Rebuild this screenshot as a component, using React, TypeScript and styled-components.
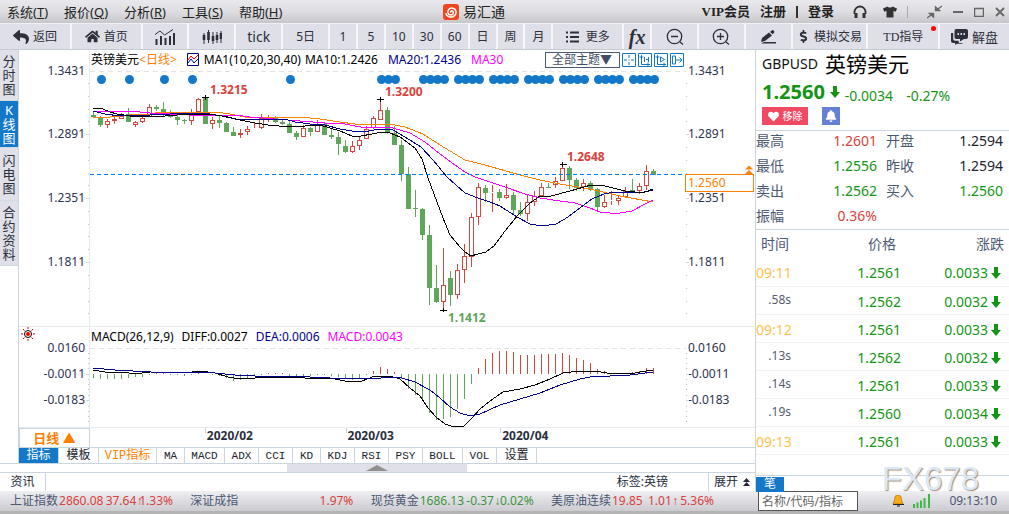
import React from 'react';
import styled, { createGlobalStyle, css } from 'styled-components';
import { FaReply, FaHome, FaTshirt, FaDollarSign, FaHeart, FaBell } from 'react-icons/fa';

const GlobalStyle = createGlobalStyle`
  * { box-sizing: border-box; }
  body { margin: 0; background: #fff; }
  body, button, input, select { font-family: "Noto Sans", "Noto Sans CJK SC", sans-serif; }
  button { border: 0; margin: 0; padding: 0; background: none; color: inherit; font-size: 12px; line-height: 14px; white-space: nowrap; }
  svg { display: block; flex: none; }
`;

const RED = '#d8423c';
const GREEN = '#149414';
const LINE = '#cbd5de';
const UP = '#d4473f';
const DOWN = '#5fa55a';
const BLUE = '#1478c8';
const SLATE = '#4b5872';

const Page = styled.div`
  min-height: 100vh;
  display: flex;
  flex-direction: column;
  font-size: 12px;
  line-height: 16px;
  color: #222a3a;
`;

/* title bar */
const TitleBar = styled.header`
  display: grid;
  grid-template-columns: 443fr auto 504fr;
  align-items: center;
  height: 23px;
  color: #222;
  background: linear-gradient(#e9e9ed, #dedee2 50%, #c6c6cb);
`;
const Menu = styled.nav`
  display: flex;
  gap: 16px;
  padding-left: 7px;
`;
const MenuButton = styled.button`
  font-size: 13px;
`;
const Brand = styled.div`
  display: flex;
  align-items: center;
  gap: 4px;
  font-size: 14px;
`;
const TitleTools = styled.div`
  display: flex;
  align-items: center;
  justify-content: flex-end;
  padding-right: 4px;
  gap: 10px;
`;
const Account = styled.a`
  color: #222;
  font-family: "Liberation Serif", "Noto Sans CJK SC", serif;
  font-size: 13px;
  font-weight: 700;
  line-height: 16px;
  text-decoration: none;
`;
const Bar = styled.i<{ $soft?: boolean }>`
  width: ${(p) => (p.$soft ? 1 : 2)}px;
  height: 12px;
  background: ${(p) => (p.$soft ? '#aaa' : '#333')};
`;
const IconButton = styled.button`
  display: flex;
  align-items: center;
  color: #333;
`;
const ToolGroup = styled.div<{ $gap: number; $left?: number }>`
  display: flex;
  align-items: center;
  gap: ${(p) => p.$gap}px;
  margin-left: ${(p) => p.$left || 0}px;
`;

/* toolbar */
const Toolbar = styled.nav`
  display: flex;
  gap: 2px;
  height: 27px;
  background: #f6f6fa;
  border-bottom: 1px solid #c4cbd4;
`;
const Tool = styled.button<{ $w: number; $size?: number }>`
  position: relative;
  flex: ${(p) => p.$w} 1 0;
  display: flex;
  align-items: center;
  justify-content: center;
  gap: 4px;
  background: #dfdfe8;
  border-top: 1px solid #eef0f5;
  font-size: ${(p) => p.$size || 12}px;
  line-height: 18px;
  color: #2d3038;
`;
const Serif = styled.span`
  font-family: "Liberation Serif", "Noto Sans CJK SC", serif;
`;
const Fx = styled.span`
  font-family: "Liberation Serif", serif;
  font-size: 20px;
  line-height: 20px;
  font-style: italic;
  font-weight: 700;
`;
const Dot = styled.i`
  position: absolute;
  right: 2px;
  top: 2px;
  width: 5px;
  height: 5px;
  border-radius: 50%;
  background: #f00;
`;

/* body */
const Main = styled.main`
  flex: 1;
  display: flex;
`;
const Left = styled.section`
  flex: 1;
  min-width: 0;
  display: flex;
  flex-direction: column;
`;
const Work = styled.div`
  flex: 1;
  display: flex;
  border-bottom: 1px solid ${LINE};
`;
const Side = styled.nav`
  width: 19px;
  border-right: 1px solid ${LINE};
`;
const SideTab = styled.button<{ $on?: boolean; $pad: number }>`
  display: block;
  width: 18px;
  padding: ${(p) => p.$pad}px 2px;
  white-space: normal;
  word-break: break-all;
  font-size: 13px;
  line-height: 14px;
  border-bottom: 1px solid #d0d8e2;
  background: ${(p) => (p.$on ? BLUE : '#e0e0e8')};
  color: ${(p) => (p.$on ? '#fff' : '#2b303c')};
`;
const ChartArea = styled.div`
  flex: 1;
  min-width: 0;
`;
const Legend = styled.div<{ $top?: boolean }>`
  display: flex;
  align-items: center;
  height: ${(p) => (p.$top ? 19 : 20)}px;
  border-top: ${(p) => (p.$top ? '0' : '1px solid #e4eaee')};
  white-space: nowrap;
`;
const LegendGutter = styled.div`
  width: 71px;
  align-self: stretch;
  padding-left: 2px;
  border-right: 1px solid #e4eaee;
`;
const LegendItems = styled.div<{ $gap: number }>`
  display: flex;
  align-items: center;
  gap: ${(p) => p.$gap}px;
  padding-left: 1px;
  flex: 1;
`;
const Ink = styled.span<{ $c?: string }>`
  color: ${(p) => p.$c || '#000'};
`;
const Theme = styled.select`
  appearance: none;
  width: 75px;
  height: 16px;
  padding: 0 0 0 6px;
  border: 1px solid #4a5a75;
  border-radius: 0;
  background: #fff;
  color: #3e4d68;
  font-size: 12px;
  line-height: 14px;
`;
const Views = styled.div`
  display: flex;
  align-items: center;
  gap: 2px;
  margin-right: 71px;
`;
const Plot = styled.svg`
  width: 100%;
  height: auto;
  overflow: visible;
  font-family: "Noto Sans", sans-serif;
  font-size: 12px;
`;
const TimeRow = styled.div`
  display: flex;
  height: 20px;
  border-top: 1px solid #e4eaee;
`;
const Period = styled.button`
  width: 71px;
  border: 1px solid ${LINE};
  border-bottom: 0;
  color: #ff8000;
  font-size: 13px;
  font-weight: 700;
  line-height: 18px;
`;
const Dates = styled.ol`
  flex: 1;
  display: flex;
  margin: 0;
  padding: 0 0 0 15.6%;
  list-style: none;
  font-weight: 700;
  color: #2b3040;
`;
const DateMark = styled.li<{ $w: number }>`
  flex: ${(p) => p.$w} 1 0;
  padding-left: 2px;
  line-height: 16px;
  background: linear-gradient(${LINE}, ${LINE}) 0 0 / 1px 5px no-repeat;
`;
const Tabs = styled.nav`
  display: flex;
  height: 16px;
  border-top: 1px solid ${LINE};
`;
const Tab = styled.button<{ $on?: boolean; $hot?: boolean; $han?: boolean; $w: number }>`
  width: ${(p) => p.$w}px;
  border-right: 1px solid ${LINE};
  text-align: center;
  font-family: "Liberation Mono", "Noto Sans CJK SC", monospace;
  font-size: ${(p) => (p.$han ? 12 : 11)}px;
  line-height: 14px;
  color: ${(p) => (p.$on ? '#fff' : p.$hot ? '#ff8000' : '#20242c')};
  background: ${(p) => (p.$on ? BLUE : '#fff')};
`;
const Splitter = styled.div`
  display: grid;
  grid-template-columns: 287fr 180fr 288fr;
  height: 9px;
  border-bottom: 1px solid ${LINE};
`;
const Grip = styled.button`
  grid-column: 2;
  display: flex;
  align-items: center;
  justify-content: center;
  background: #e0e0e8;
`;
const News = styled.div`
  display: flex;
  align-items: stretch;
  height: 18px;
  line-height: 18px;
`;
const NewsTab = styled.button<{ $right?: boolean }>`
  display: flex;
  align-items: center;
  justify-content: center;
  gap: 5px;
  width: ${(p) => (p.$right ? 47 : 46)}px;
  border: solid ${LINE};
  border-width: ${(p) => (p.$right ? '0 0 0 1px' : '0 1px 0 0')};
`;
const Tag = styled.span`
  margin: 0 40px 0 auto;
`;

/* quote panel */
const Quote = styled.aside`
  position: relative;
  width: 254px;
  display: flex;
  flex-direction: column;
  border-left: 1px solid ${LINE};
`;
const Summary = styled.section`
  height: 81px;
  padding-left: 6px;
  border-bottom: 1px solid ${LINE};
`;
const SummaryRow = styled.div<{ $h: number; $gap: number }>`
  display: flex;
  align-items: center;
  gap: ${(p) => p.$gap}px;
  height: ${(p) => p.$h}px;
`;
const Code = styled.span`
  font-size: 14px;
  color: #111;
`;
const Name = styled.h1`
  margin: 0;
  font-size: 21px;
  line-height: 28px;
  font-weight: 400;
  color: #000;
`;
const Price = styled.strong`
  font-size: 20px;
  line-height: 28px;
  color: ${GREEN};
`;
const Change = styled.span`
  padding-top: 8px;
  font-size: 14px;
  color: ${GREEN};
`;
const Remove = styled.button`
  display: flex;
  align-items: center;
  justify-content: center;
  gap: 4px;
  width: 46px;
  height: 18px;
  background: #f04a63;
  color: #fff;
  font-size: 10px;
`;
const Alert = styled(Remove)`
  width: 18px;
  background: #6680d6;
`;
const Facts = styled.dl`
  display: grid;
  grid-template-columns: 40px 81px 49px 1fr;
  margin: 0;
  padding-right: 6px;
  height: 99px;
  grid-auto-rows: 25px;
  align-items: start;
  border-bottom: 1px solid ${LINE};
  font-size: 14px;
  line-height: 20px;
`;
const Fact = styled.dt`
  color: ${SLATE};
  &:nth-of-type(even) { padding-left: 9px; }
`;
const Value = styled.dd<{ $c?: string }>`
  margin: 0;
  text-align: right;
  color: ${(p) => p.$c || '#20242c'};
`;
const Ticks = styled.table`
  width: 100%;
  border-collapse: collapse;
  table-layout: fixed;
  font-size: 14px;
  line-height: 20px;
`;
const Th = styled.th<{ $w?: number; $a?: string }>`
  width: ${(p) => (p.$w ? `${p.$w}px` : 'auto')};
  height: 28px;
  padding: 0 5px;
  font-weight: 400;
  text-align: ${(p) => p.$a || 'left'};
  color: ${SLATE};
`;
const Td = styled.td<{ $kind: 'min' | 'sec' | 'num' }>`
  height: 28px;
  padding: 3px 0 0;
  border-bottom: 1px solid #f0f2f4;
  text-align: right;
  color: ${GREEN};
  ${(p) => p.$kind === 'min' && css`text-align: left; color: #ffc14d;`}
  ${(p) => p.$kind === 'sec' && css`padding: 0 18px 0 0; font-size: 12px; color: #555d70;`}
`;
const Delta = styled.span`
  display: flex;
  align-items: center;
  justify-content: flex-end;
  gap: 3px;
  padding-right: 8px;
`;
const QuoteFoot = styled.div`
  margin-top: auto;
  height: 16px;
  border-top: 1px solid ${LINE};
`;
const FootTab = styled.button`
  width: 28px;
  height: 15px;
  background: ${BLUE};
  color: #fff;
`;
const Watermark = styled.div`
  position: absolute;
  right: 30px;
  bottom: 0;
  font-family: "Liberation Sans", sans-serif;
  font-size: 33px;
  line-height: 24px;
  color: #dbe9f6;
  text-shadow: 1px 1px 1px #a58c7c;
`;

/* status bar */
const Status = styled.footer`
  display: flex;
  align-items: center;
  height: 23px;
  border-bottom: 3px solid #b4b4b4;
  background: linear-gradient(#f0f0f3, #dcdce1 50%, #cbcbd1);
  white-space: nowrap;
`;
const Tickers = styled.div`
  flex: 1;
  display: flex;
  justify-content: space-between;
  padding: 0 44px 0 10px;
`;
const Ticker = styled.div<{ $c: string }>`
  display: flex;
  gap: 1px;
  width: 163px;
  color: ${(p) => p.$c};
`;
const TickerName = styled.span`
  color: ${SLATE};
`;
const Move = styled.span`
  flex: 1 1 0;
  min-width: 0;
`;
const Arrow = styled.span`
  font-family: "Liberation Mono", monospace;
`;
const StatusRight = styled.div`
  display: flex;
  align-items: center;
  width: 251px;
  height: 20px;
  color: ${SLATE};
`;
const Search = styled.input`
  width: 100px;
  height: 20px;
  margin-right: 34px;
  padding: 0 3px;
  border: 1px solid #555;
  border-radius: 0;
  font-size: 12px;
  &::placeholder { color: #666; opacity: 1; }
`;
const Clock = styled.time`
  margin-left: 18px;
`;

/* price bars: high, body top, body bottom, low, rising */
const candles: number[][] = [
  [112,115,117,117,0],[116,118,125,127,0],[119,121,125,128,1],[117,119,121,124,1],[113,116,119,119,1],
  [108,114,122,122,0],[121,122,125,127,1],[114,118,122,123,1],[104,107,117,117,1],[105,107,109,111,0],
  [102,109,115,116,0],[110,115,117,118,0],[115,117,120,125,0],[119,120,121,124,0],[109,115,121,125,1],
  [98,99,112,112,1],[96,98,124,124,0],[117,120,124,129,1],[116,120,123,128,0],[122,123,132,132,0],
  [127,132,136,136,0],[129,133,135,138,1],[126,129,132,135,1],[123,128,129,129,1],[114,118,128,129,1],
  [115,118,119,122,1],[116,118,122,123,0],[119,122,124,125,0],[120,124,133,133,0],[131,133,137,140,0],
  [125,128,137,137,1],[127,128,132,136,0],[120,125,132,132,1],[123,124,135,135,0],[129,135,137,139,0],
  [132,137,144,155,0],[140,146,152,153,0],[141,146,152,153,1],[137,140,146,150,1],[126,129,139,139,1],
  [116,118,128,129,1],[100,110,120,120,1],[107,110,133,134,0],[126,133,145,145,0],[140,145,174,181,0],
  [167,174,209,209,0],[190,208,209,217,0],[208,209,235,240,0],[225,235,288,305,0],[265,288,302,303,0],
  [248,285,302,309,1],[271,278,295,306,0],[264,270,295,299,1],[244,256,270,283,1],[213,217,257,267,1],
  [183,187,217,225,1],[185,188,193,202,0],[185,192,193,212,1],[189,192,198,201,0],[184,195,198,199,1],
  [192,195,210,214,0],[202,210,214,216,0],[195,202,214,221,1],[191,196,202,206,1],[183,187,196,196,1],
  [183,187,188,188,0],[177,181,185,188,1],[165,168,181,181,1],[166,168,180,189,0],[178,180,188,191,0],
  [179,183,187,191,1],[181,183,190,191,0],[188,189,207,210,0],[195,202,207,208,1],[191,200,201,205,1],
  [196,198,201,205,1],[187,191,197,198,1],[179,190,192,192,0],[183,186,191,194,1],[165,171,186,190,1],
  [169,171,175,175,0],
];
const averages: [string, string][] = [
  ['#ff8000', '93,117 110,117 130,115 150,114 160,112 215,112 230,114 245,117 300,117 320,119 340,122 355,124 390,124 405,127 423,134 440,145 465,160 485,165 520,175 540,180 560,184 590,189 620,196 653,202'],
  ['#ff00ff', '93,111 130,111 150,113 190,115 210,115 235,115 250,117 275,119 300,121 325,123 340,123 355,126 367,128 380,127 393,128 410,133 425,142 440,154 455,165 465,172 475,177 490,182 505,187 525,194 540,198 560,201 575,203 590,208 600,212 610,213 620,213 632,211 645,204 653,200'],
  ['#00008b', '93,111 105,114 120,116 150,115 170,114 195,113 210,114 222,116 235,119 260,119 285,119 295,122 310,124 325,125 340,129 352,131 363,132 380,129 393,130 405,137 421,147 433,160 447,177 465,193 478,198 490,202 500,206 517,217 530,224 542,226 556,224 565,219 580,208 592,199 604,194 615,192 640,193 653,190'],
  ['#000', '93,108 103,109 110,112 117,114 130,116 150,117 165,116 190,114 215,115 228,117 240,120 255,123 268,125 290,127 305,126 320,125 330,128 340,131 352,136 361,136 372,134 382,132 390,133 400,137 415,148 422,159 428,178 443,218 450,235 460,247 465,252 471,256 478,254 486,252 494,246 505,231 518,215 530,203 540,196 551,196 570,191 591,185 605,186 625,191 635,192 645,192 653,189'],
];
/* bars that carry an event dot above them */
const events = [1, 5, 10, 14, 28, 41, 42, 43, 47, 48, 49, 50, 52, 53, 54, 55, 57, 58, 59, 60, 62, 63, 64, 65, 67, 68, 69, 70, 72, 73, 74, 75, 77, 78, 79, 80];
const histogram = [4,5,5,5,5,4,3,3,1,-1,-1,1,1,2,1,-2,0,1,2,4,7,6,4,2,1,-1,-1,-1,2,4,2,2,1,1,2,3,5,6,4,1,-3,-7,-5,-2,5,15,21,27,39,46,45,43,35,25,10,-6,-15,-21,-23,-23,-22,-19,-19,-19,-20,-20,-20,-21,-19,-16,-14,-11,-5,-3,-1,-1,-1,-2,-3,-6,-6];
const diff = '93,370 105,372 123,372 135,374 150,372 185,373 200,371 215,373 228,377 240,379 255,378 268,377 290,377 305,378 330,378 345,381 362,381 375,376 390,376 400,379 410,388 420,396 428,408 436,417 445,424 451,426 464,426 472,418 480,409 490,401 503,392 520,389 535,385 550,379 563,373 580,371 595,371 607,373 630,374 640,372 653,370';
const dea = '93,368 115,370 150,372 215,373 235,375 255,376 290,376 330,378 370,379 392,377 402,378 415,382 430,390 440,398 450,407 460,413 470,416 480,414 500,405 520,399 540,393 560,385 580,379 590,377 610,376 630,375 653,372';
const X0 = 93;
const STEP = 7;

function Axis({ marks, minor, top, bottom }: { marks: [string, number][]; minor: number[]; top: number; bottom: number }) {
  return (
    <g>
      <path d={`M89.5 ${top}V${bottom}`} stroke="#e4eaee" />
      {marks.map(([label, y]) => (
        <g key={label} fill="#2d3350">
          <text x="85" y={y + 4} textAnchor="end">{label}</text>
          <text x="688" y={y + 4}>{label}</text>
        </g>
      ))}
      {marks.slice(1).map(([label, y]) => (
        <path key={label} d={`M86 ${y}.5h3M686 ${y}.5h3`} stroke={LINE} />
      ))}
      {minor.map((y) => (
        <path key={y} d={`M88 ${y}.5h1M686 ${y}.5h1`} stroke="#b8c4cf" />
      ))}
      <path d={`M90 ${marks[0][1]}.5H686`} stroke="#e4e4e4" strokeDasharray="5 4" />
    </g>
  );
}

function PriceChart() {
  return (
    <Plot viewBox="19 69 736 257" role="img" aria-label="英镑美元日线">
      <g shapeRendering="crispEdges">
        <Axis
          top={69}
          bottom={326}
          marks={[['1.3431', 71], ['1.2891', 134], ['1.2351', 198], ['1.1811', 262]]}
          minor={[83, 96, 109, 121, 147, 160, 173, 185, 211, 224, 236, 249, 275, 288, 301, 313]}
        />
        {candles.map(([h, t, b, l, up], i) => {
          const x = X0 + i * STEP;
          return up ? (
            <g key={i} stroke={UP} fill="none">
              <path d={`M${x + 0.5} ${h}V${t}M${x + 0.5} ${b}V${l}`} />
              <rect x={x - 1.5} y={t + 0.5} width="4" height={Math.max(b - t - 1, 0)} />
            </g>
          ) : (
            <g key={i} fill={DOWN}>
              <rect x={x} y={h} width="1" height={l - h} />
              <rect x={x - 2} y={t} width="5" height={Math.max(b - t, 1)} />
            </g>
          );
        })}
        {averages.map(([color, points]) => (
          <polyline key={color} points={points} fill="none" stroke={color} />
        ))}
        <path d="M90 174.5H685" stroke="#0080f0" strokeDasharray="4 3" />
        <path d="M202 97.5h7M205.5 95v5M377 99.5h7M380.5 97v5M560 164.5h7M562.5 162v5M440 310.5h7M443.5 308v4" stroke="#000" />
      </g>
      <g fill={BLUE}>
        {events.map((i) => (
          <circle key={i} cx={X0 + 1.5 + i * STEP} cy="79.5" r="4.5" />
        ))}
      </g>
      <g fontWeight="700" fill={RED}>
        <text x="210" y="94">1.3215</text>
        <text x="385" y="96">1.3200</text>
        <text x="567" y="161">1.2648</text>
        <text x="448" y="322" fill={DOWN}>1.1412</text>
      </g>
      <rect x="685.5" y="174.5" width="68" height="17" fill="#fff" stroke="#ff8000" />
      <text x="688" y="187" fill="#ff8000">1.2560</text>
      <path d="M749 165.500l4 4h-8zM749 170l4 4h-8z" fill="#ff8000" />
    </Plot>
  );
}

function MacdChart() {
  return (
    <Plot viewBox="19 346 736 81" role="img" aria-label="MACD">
      <g shapeRendering="crispEdges">
        <Axis
          top={346}
          bottom={427}
          marks={[['0.0160', 348], ['-0.0011', 374], ['-0.0183', 400]]}
          minor={[353, 358, 363, 368, 379, 384, 389, 395, 406, 411, 416, 421]}
        />
        {histogram.map((v, i) => (
          <path key={i} d={`M${X0 + 0.5 + i * STEP} 373.5v${v}`} stroke={v > 0 ? DOWN : UP} />
        ))}
        <polyline points={diff} fill="none" stroke="#000" />
        <polyline points={dea} fill="none" stroke="#00008b" />
      </g>
    </Plot>
  );
}

const DownArrow = () => (
  <svg width="10" height="12" viewBox="0 0 10 12"><path d="M3 0h4v6h3L5 12 0 6h3z" fill={GREEN} /></svg>
);

const ZoomGlyph = ({ plus }: { plus?: boolean }) => (
  <svg width="18" height="18" viewBox="0 0 18 18" fill="none" stroke="#2d3038" strokeWidth="1.3">
    <circle cx="8.500" cy="8.500" r="7.200" />
    <path d={plus ? 'M5 8.500h7M8.500 5v7M14 14l3 2.500' : 'M5 8.500h7M14 14l3 2.500'} />
  </svg>
);

const viewIcons = [
  'M7 2v3M7 9v3M2 7h3M9 7h3M6.500 7h1',
  'M3.500 2v9.500H12M1.500 4h4M10 9.500v4M6.500 4v5M10.500 4v5M8 6.500h2',
  'M3.500 2v9.500H12M1.500 4h4M10 9.500v4M6.500 4v5l4-2.500z',
  'M2.500 3v8h3V3zM6 7h6M9.500 4.500L12 7l-2.500 2.500',
];

const tickers: [string, string, string, string, string, string][] = [
  ['上证指数', '2860.08', '37.64', '↑', '1.33%', RED],
  ['深证成指', '', '', '', '1.97%', RED],
  ['现货黄金', '1686.13', '-0.37', '↓', '0.02%', '#3f9440'],
  ['美原油连续', '19.85', ' 1.01', '↑', '5.36%', RED],
];
const ticks: [string, string, string][] = [
  ['09:11', '1.2561', '0.0033'], ['.58s', '1.2562', '0.0032'], ['09:12', '1.2561', '0.0033'],
  ['.13s', '1.2562', '0.0032'], ['.14s', '1.2561', '0.0033'], ['.19s', '1.2560', '0.0034'], ['09:13', '1.2561', '0.0033'],
];
const facts: [string, string, string?][] = [
  ['最高', '1.2601', RED], ['开盘', '1.2594'], ['最低', '1.2556', GREEN], ['昨收', '1.2594'],
  ['卖出', '1.2562', GREEN], ['买入', '1.2560', GREEN], ['振幅', '0.36%', RED],
];
const indicators: [string, number, boolean?][] = [
  ['指标', 40, true], ['模板', 40, true], ['VIP指标', 58, true], ['MA', 28], ['MACD', 40], ['ADX', 34], ['CCI', 34], ['KD', 28],
  ['KDJ', 34], ['RSI', 34], ['PSY', 34], ['BOLL', 40], ['VOL', 34], ['设置', 40, true],
];
const menus: [string, string][] = [['系统', 'T'], ['报价', 'Q'], ['分析', 'R'], ['工具', 'S'], ['帮助', 'H']];
const periods: [string, number][] = [['5日', 45], ['1', 26], ['5', 26], ['10', 26], ['30', 26], ['60', 26], ['日', 26], ['周', 26], ['月', 26]];

export default function App() {
  return (
    <Page>
      <GlobalStyle />
      <TitleBar>
        <Menu>
          {menus.map(([label, key]) => (
            <MenuButton key={key}>{label}(<u>{key}</u>)</MenuButton>
          ))}
        </Menu>
        <Brand>
          <svg width="16" height="16" viewBox="0 0 16 16">
            <rect width="16" height="16" rx="3" fill="#f0451e" />
            <path d="M8 8.500c-1-.8.300-2.200 1.600-1.300 1.600 1.200.4 3.900-1.900 3.700-3-.2-3.800-3.600-2-5.500C8 3 12.300 4 13 7.500c.4 3-2 5.600-5 5.600-2.600 0-4.600-1.600-5.200-3.800" fill="none" stroke="#fff" strokeWidth="1.500" />
          </svg>
          <span>易汇通</span>
        </Brand>
        <TitleTools>
          <Account href="#vip">VIP会员</Account>
          <Account href="#register">注册</Account>
          <Bar />
          <Account href="#login">登录</Account>
          <ToolGroup $gap={16} $left={9}>
            <IconButton aria-label="客服">
              <svg width="14" height="14" viewBox="0 0 14 14" fill="none" stroke="#333">
                <path d="M1.500 9V7a5.500 5.500 0 0 1 11 0v2" strokeWidth="1.800" />
                <path d="M3 8v5M11 8v5" strokeWidth="3" />
              </svg>
            </IconButton>
            <IconButton aria-label="换肤"><FaTshirt size={14} /></IconButton>
          </ToolGroup>
          <Bar $soft />
          <ToolGroup $gap={11} $left={9}>
            <IconButton aria-label="收起">
              <svg width="15" height="14" viewBox="0 0 15 14" fill="#666" stroke="#666" strokeWidth="1.400">
                <path d="M0 13l4-3M15 1l-4 3" fill="none" />
                <path d="M2.500 8.500H6.500V12zM12.500 5.500H8.500V2z" />
              </svg>
            </IconButton>
            <IconButton aria-label="最小化"><svg width="10" height="10" viewBox="0 0 10 10"><path d="M0 5h10" stroke="#666" strokeWidth="2" /></svg></IconButton>
            <IconButton aria-label="最大化"><svg width="10" height="10" viewBox="0 0 10 10"><path d="M.5 1.500h9v8h-9zM0 1.500h10" fill="none" stroke="#666" strokeWidth="1.500" /></svg></IconButton>
            <IconButton aria-label="关闭"><svg width="10" height="10" viewBox="0 0 10 10"><path d="M1 1l8 8M9 1L1 9" stroke="#666" strokeWidth="1.800" /></svg></IconButton>
          </ToolGroup>
        </TitleTools>
      </TitleBar>

      <Toolbar>
        <Tool $w={70}><FaReply size={16} /> 返回</Tool>
        <Tool $w={69}><FaHome size={15} /> 首页</Tool>
        <Tool $w={45} aria-label="分时图">
          <svg width="20" height="16" viewBox="0 0 20 16" stroke="#2d3038" fill="none">
            <path d="M1.500 10v6M6 7v9M10.500 9v7M15 7v9M19 4v12" strokeWidth="2" />
            <path d="M0 5.500L5 2l4.500 4L18 .5" />
          </svg>
        </Tool>
        <Tool $w={45} aria-label="K线图">
          <svg width="20" height="16" viewBox="0 0 20 16" stroke="#2d3038" fill="none">
            <path d="M2 4v11M6.500 1v13M11 3v12M15 3v11M19 2v12" />
            <path d="M2 6v5M6.500 3v8M11 7v5M15 6v5M19 4v6" strokeWidth="2.600" />
          </svg>
        </Tool>
        <Tool $w={45} $size={14}>tick</Tool>
        {periods.map(([label, w]) => <Tool key={label} $w={w}>{label}</Tool>)}
        <Tool $w={69}>
          <svg width="13" height="12" viewBox="0 0 13 12" stroke="#2d3038" strokeWidth="2"><path d="M0 1.500h2M4 1.500h9M0 6h2M4 6h9M0 10.500h2M4 10.500h9" /></svg>
          &nbsp;更多
        </Tool>
        <Tool $w={26}><Fx>fx</Fx></Tool>
        <Tool $w={45} aria-label="缩小"><ZoomGlyph /></Tool>
        <Tool $w={45} aria-label="放大"><ZoomGlyph plus /></Tool>
        <Tool $w={45} aria-label="画线">
          <svg width="16" height="14" viewBox="0 0 16 14" fill="#2d3038">
            <path d="M1 12l1-4 7-5.500 3 3L5 11zM10 2l2-1.700c1-.8 3 1.300 2.200 2.200L12.800 4.300z" />
            <path d="M4 12h12v1.500H1z" />
          </svg>
        </Tool>
        <Tool $w={74}><FaDollarSign size={13} />模拟交易</Tool>
        <Tool $w={70}><Serif>TD指导</Serif><Dot /></Tool>
        <Tool $w={69} $size={13}>
          <svg width="17" height="16" viewBox="0 0 17 16" fill="#2d3038">
            <path d="M5 0h10q2 0 2 2v6q0 2-2 2h-2l-4 2.500V10H5q-1.500 0-1.500-2V2Q3.500 0 5 0z" />
            <path d="M0 4h2.200v6q0 1.800 2 1.800H7.500L8 14h4l-1 .8H6L4.500 16 4 14H2q-2 0-2-2z" />
            <path d="M6.500 4h1.500v2H6.500zM9.500 4H11v2H9.500zM12.500 4H14v2h-1.500z" fill="#dfdfe8" />
          </svg>
          解盘
        </Tool>
      </Toolbar>

      <Main>
        <Left>
          <Work>
            <Side>
              <SideTab $pad={4}>分时图</SideTab>
              <SideTab $pad={2} $on>K 线图</SideTab>
              <SideTab $pad={5}>闪电图</SideTab>
              <SideTab $pad={4}>合约资料</SideTab>
            </Side>
            <ChartArea>
              <Legend $top>
                <LegendGutter />
                <LegendItems $gap={10}>
                  <Ink>英镑美元<Ink $c="#ff8000">&lt;日线&gt;</Ink></Ink>
                  <ToolGroup $gap={4}>
                    <svg width="13" height="13" viewBox="0 0 13 13" fill="none">
                      <path d="M.5.5h11v12H.5z" stroke="#000080" />
                      <path d="M1 7l3-4 3 3 4-4" stroke="#f00" />
                      <path d="M1 10l3-4 3 4 4-4" stroke="#0000c0" />
                    </svg>
                    <Ink>MA1(10,20,30,40)</Ink>
                    <Ink>MA10:1.2426</Ink>
                  </ToolGroup>
                  <Ink $c="#00008b">MA20:1.2436</Ink>
                  <Ink $c="#ff00ff">MA30</Ink>
                </LegendItems>
                <Views>
                  <Theme aria-label="主题"><option>全部主题▼</option></Theme>
                  {viewIcons.map((d) => (
                    <IconButton key={d} aria-label="视图">
                      <svg width="14" height="14" viewBox="0 0 14 14" fill="none" stroke={BLUE}>
                        <path d="M.5.5h13v13H.5z" />
                        <path d={d} />
                      </svg>
                    </IconButton>
                  ))}
                </Views>
              </Legend>
              <PriceChart />
              <Legend>
                <LegendGutter>
                  <svg width="14" height="14" viewBox="0 0 14 14" fill="none">
                    <circle cx="7" cy="7" r="3.500" stroke="#000" />
                    <circle cx="7" cy="7" r="2" fill="#e00" />
                    <path d="M7 0v2M7 12v2M0 7h2M12 7h2M2 2l1.500 1.500M10.500 10.500L12 12M12 2l-1.500 1.500M2 12l1.500-1.500" stroke="#e00" />
                  </svg>
                </LegendGutter>
                <LegendItems $gap={8}>
                  <Ink>MACD(26,12,9)</Ink>
                  <Ink>DIFF:0.0027</Ink>
                  <Ink $c="#00008b">DEA:0.0006</Ink>
                  <Ink $c="#ff00ff">MACD:0.0043</Ink>
                </LegendItems>
              </Legend>
              <MacdChart />
              <TimeRow>
                <Period>日线 ▲</Period>
                <Dates>
                  <DateMark $w={140}>2020/02</DateMark>
                  <DateMark $w={154}>2020/03</DateMark>
                  <DateMark $w={255}>2020/04</DateMark>
                </Dates>
              </TimeRow>
              <Tabs>
                {indicators.map(([label, w, han], i) => (
                  <Tab key={label} $w={w} $han={han} $on={i === 0} $hot={i === 2}>{label}</Tab>
                ))}
              </Tabs>
            </ChartArea>
          </Work>
          <Splitter>
            <Grip aria-label="展开面板"><svg width="22" height="6" viewBox="0 0 22 6"><path d="M11 0l11 6H0z" fill="#909090" /></svg></Grip>
          </Splitter>
          <News>
            <NewsTab>资讯</NewsTab>
            <Tag>标签:英镑</Tag>
            <NewsTab $right>
              展开
              <svg width="7" height="9" viewBox="0 0 7 9" fill="#222a3a"><path d="M3.500 0L7 4H0zM3.500 4L7 8H0z" /></svg>
            </NewsTab>
          </News>
        </Left>

        <Quote>
          <Summary>
            <SummaryRow $h={28} $gap={7}><Code>GBPUSD</Code><Name>英镑美元</Name></SummaryRow>
            <SummaryRow $h={28} $gap={5}>
              <Price>1.2560</Price><DownArrow /><Change>-0.0034</Change>&nbsp;<Change>-0.27%</Change>
            </SummaryRow>
            <SummaryRow $h={20} $gap={14}>
              <Remove><FaHeart size={11} />移除</Remove>
              <Alert aria-label="提醒"><FaBell size={12} /></Alert>
            </SummaryRow>
          </Summary>
          <Facts>
            {facts.map(([k, v, c]) => (
              <React.Fragment key={k}><Fact>{k}</Fact><Value $c={c}>{v}</Value></React.Fragment>
            ))}
          </Facts>
          <Ticks>
            <thead><tr><Th $w={53}>时间</Th><Th $w={92} $a="right">价格</Th><Th $a="right">涨跌</Th></tr></thead>
            <tbody>
              {ticks.map(([t, p, d]) => (
                <tr key={t}>
                  <Td $kind={t.startsWith('.') ? 'sec' : 'min'}>{t}</Td>
                  <Td $kind="num">{p}</Td>
                  <Td $kind="num"><Delta>{d}<DownArrow /></Delta></Td>
                </tr>
              ))}
            </tbody>
          </Ticks>
          <QuoteFoot><FootTab>笔</FootTab></QuoteFoot>
          <Watermark>FX678</Watermark>
        </Quote>
      </Main>

      <Status>
        <Tickers>
          {tickers.map(([name, value, move, arrow, pct, color]) => (
            <Ticker key={name} $c={color}>
              <TickerName>{name}</TickerName><span>{value}</span><Move>&#8202;{move}<Arrow>{arrow}</Arrow></Move><span>{pct}</span>
            </Ticker>
          ))}
        </Tickers>
        <StatusRight>
          <Search aria-label="搜索" placeholder="名称/代码/指标" />
          <svg width="12" height="12" viewBox="0 0 12 12"><path d="M6 0c3 0 3.500 2 3.500 5L11 9H1l1.500-4C2.500 2 3 0 6 0z" fill="#f5ac10" stroke="#8a5a00" strokeWidth=".5" /><path d="M1 9.500h11M5 11h3" stroke="#222" /></svg>
          &nbsp;&nbsp;&nbsp;
          <svg width="18" height="14" viewBox="0 0 18 14" stroke="#3fb84a" strokeWidth="2"><path d="M1 14v-4M4.500 14V8.500M8 14V6.500M11.500 14V4M16 14V0" /></svg>
          <Clock>09:13:10</Clock>
        </StatusRight>
      </Status>
    </Page>
  );
}
